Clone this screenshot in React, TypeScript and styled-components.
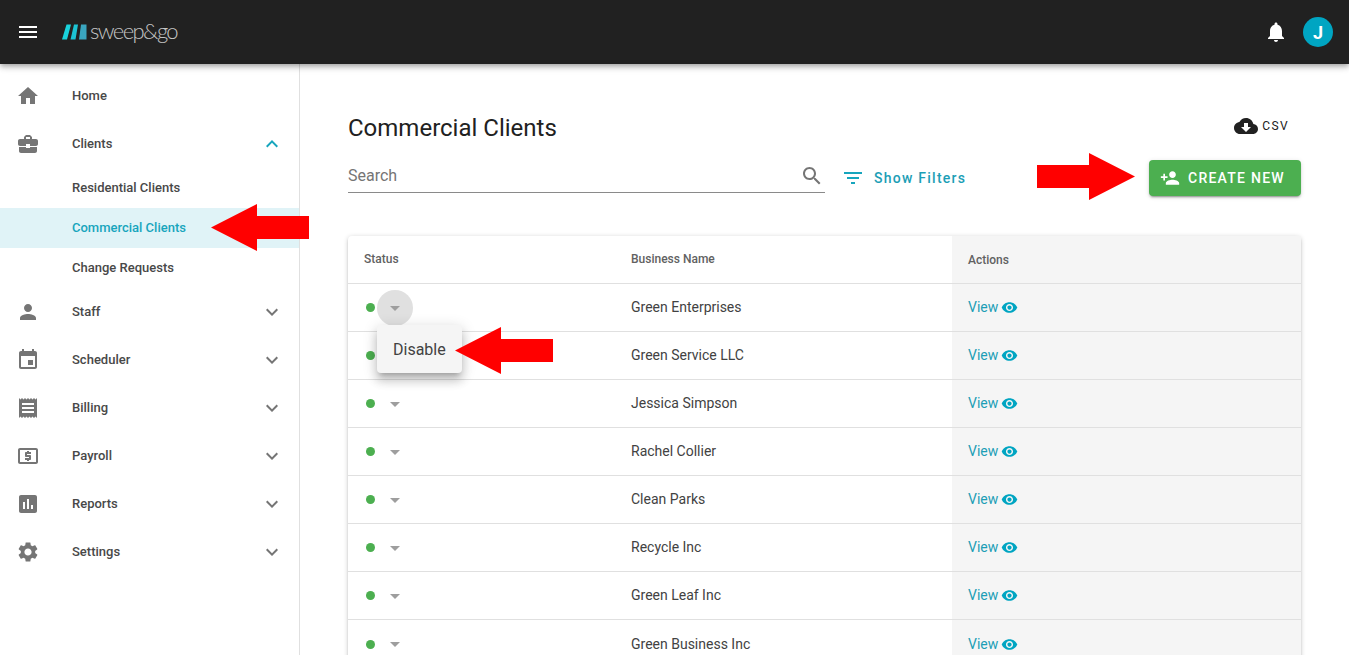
import React from 'react';
import styled, { createGlobalStyle } from 'styled-components';

const ICONS = {
  menu: 'M3 18h18v-2H3v2zm0-5h18v-2H3v2zm0-7v2h18V6H3z',
  home: 'M10 20v-6h4v6h5v-8h3L12 3 2 12h3v8z',
  business:
    'M10 16v-1H3.01L3 19c0 1.11.89 2 2 2h14c1.11 0 2-.89 2-2v-4h-7v1h-4zm10-9h-4.01V5l-2-2h-4l-2 2v2H4c-1.1 0-2 .9-2 2v3c0 1.11.89 2 2 2h6v-2h4v2h6c1.1 0 2-.9 2-2V9c0-1.1-.9-2-2-2zm-6 0h-4V5h4v2z',
  person:
    'M12 12c2.21 0 4-1.79 4-4s-1.79-4-4-4-4 1.79-4 4 1.79 4 4 4zm0 2c-2.67 0-8 1.34-8 4v2h16v-2c0-2.66-5.33-4-8-4z',
  event:
    'M17 12h-5v5h5v-5zM16 1v2H8V1H6v2H5c-1.11 0-1.99.9-1.99 2L3 19c0 1.1.89 2 2 2h14c1.1 0 2-.9 2-2V5c0-1.1-.9-2-2-2h-1V1h-2zm3 18H5V8h14v11z',
  receipt:
    'M18 17H6v-2h12v2zm0-4H6v-2h12v2zm0-4H6V7h12v2zM3 22l1.5-1.5L6 22l1.5-1.5L9 22l1.5-1.5L12 22l1.5-1.5L15 22l1.5-1.5L18 22l1.5-1.5L21 22V2l-1.5 1.5L18 2l-1.5 1.5L15 2l-1.5 1.5L12 2l-1.5 1.5L9 2 7.5 3.5 6 2 4.5 3.5 3 2v20z',
  atm: 'M11 17h2v-1h1c.55 0 1-.45 1-1v-3c0-.55-.45-1-1-1h-3v-1h4V8h-2V7h-2v1h-1c-.55 0-1 .45-1 1v3c0 .55.45 1 1 1h3v1H9v2h2v1zm9-13H4c-1.11 0-1.99.89-1.99 2L2 18c0 1.11.89 2 2 2h16c1.11 0 2-.89 2-2V6c0-1.11-.89-2-2-2zm0 14H4V6h16v12z',
  assessment:
    'M19 3H5c-1.1 0-2 .9-2 2v14c0 1.1.9 2 2 2h14c1.1 0 2-.9 2-2V5c0-1.1-.9-2-2-2zM9 17H7v-7h2v7zm4 0h-2V7h2v10zm4 0h-2v-4h2v4z',
  settings:
    'M19.14 12.94c.04-.3.06-.61.06-.94 0-.32-.02-.64-.07-.94l2.03-1.58c.18-.14.23-.41.12-.61l-1.92-3.32c-.12-.22-.37-.29-.59-.22l-2.39.96c-.5-.38-1.03-.7-1.62-.94l-.36-2.54c-.04-.24-.24-.41-.48-.41h-3.84c-.24 0-.43.17-.47.41l-.36 2.54c-.59.24-1.13.57-1.62.94l-2.39-.96c-.22-.08-.47 0-.59.22L2.74 8.87c-.12.21-.08.47.12.61l2.03 1.58c-.05.3-.09.63-.09.94s.02.64.07.94l-2.03 1.58c-.18.14-.23.41-.12.61l1.92 3.32c.12.22.37.29.59.22l2.39-.96c.5.38 1.03.7 1.62.94l.36 2.54c.05.24.24.41.48.41h3.84c.24 0 .44-.17.47-.41l.36-2.54c.59-.24 1.13-.56 1.62-.94l2.39.96c.22.08.47 0 .59-.22l1.92-3.32c.12-.22.07-.47-.12-.61l-2.01-1.58zM12 15.6c-1.98 0-3.6-1.62-3.6-3.6s1.62-3.6 3.6-3.6 3.6 1.62 3.6 3.6-1.62 3.6-3.6 3.6z',
  expandMore: 'M16.59 8.59 12 13.17 7.41 8.59 6 10l6 6 6-6z',
  expandLess: 'M12 8l-6 6 1.41 1.41L12 10.83l4.59 4.58L18 14z',
  search:
    'M15.5 14h-.79l-.28-.27C15.41 12.59 16 11.11 16 9.5 16 5.91 13.09 3 9.5 3S3 5.91 3 9.5 5.91 16 9.5 16c1.61 0 3.09-.59 4.23-1.57l.27.28v.79l5 4.99L20.49 19l-4.99-5zm-6 0C7.01 14 5 11.99 5 9.5S7.01 5 9.5 5 14 7.01 14 9.5 11.99 14 9.5 14z',
  filter: 'M10 18h4v-2h-4v2zM3 6v2h18V6H3zm3 7h12v-2H6v2z',
  cloud:
    'M19.35 10.04C18.67 6.59 15.64 4 12 4 9.11 4 6.6 5.64 5.35 8.04 2.34 8.36 0 10.91 0 14c0 3.31 2.69 6 6 6h13c2.76 0 5-2.24 5-5 0-2.64-2.05-4.78-4.65-4.96zM17 13l-5 5-5-5h3V9h4v4h3z',
  personAdd:
    'M15 12c2.21 0 4-1.79 4-4s-1.79-4-4-4-4 1.79-4 4 1.79 4 4 4zm-9-2V7H4v3H1v2h3v3h2v-3h3v-2H6zm9 4c-2.67 0-8 1.34-8 4v2h16v-2c0-2.66-5.33-4-8-4z',
  bell: 'M12 22c1.1 0 2-.9 2-2h-4c0 1.1.89 2 2 2zm6-6v-5c0-3.07-1.64-5.64-4.5-6.32V4c0-.83-.67-1.5-1.5-1.5s-1.5.67-1.5 1.5v.68C7.63 5.36 6 7.92 6 11v5l-2 2v1h16v-1l-2-2z',
  eye: 'M12 4.5C7 4.5 2.73 7.61 1 12c1.73 4.39 6 7.5 11 7.5s9.27-3.11 11-7.5c-1.73-4.39-6-7.5-11-7.5zM12 17c-2.76 0-5-2.24-5-5s2.24-5 5-5 5 2.24 5 5-2.24 5-5 5zm0-8c-1.66 0-3 1.34-3 3s1.34 3 3 3 3-1.34 3-3-1.34-3-3-3z',
  dropDown: 'M7 10l5 5 5-5z',
};

type IconName = keyof typeof ICONS;

const GlobalStyle = createGlobalStyle`
  html, body {
    margin: 0;
    height: 100%;
    overflow: hidden;
    background: #fff;
    font-family: Roboto, "Liberation Sans", sans-serif;
  }
  * { box-sizing: border-box; }
`;

const StyledIcon = styled.svg<{ $size: number; $color: string }>`
  width: ${({ $size }) => $size}px;
  height: ${({ $size }) => $size}px;
  fill: ${({ $color }) => $color};
  flex-shrink: 0;
  display: block;
`;

const Icon = ({
  name,
  size = 24,
  color = '#757575',
}: {
  name: IconName;
  size?: number;
  color?: string;
}) => (
  <StyledIcon viewBox="0 0 24 24" $size={size} $color={color}>
    <path d={ICONS[name]} />
  </StyledIcon>
);

const Page = styled.div`
  position: relative;
  width: 1349px;
  height: 655px;
  overflow: hidden;
  display: flex;
  flex-direction: column;
`;

const TopBar = styled.header`
  height: 64px;
  flex-shrink: 0;
  background: #212121;
  display: flex;
  align-items: center;
  padding: 0 16px;
  box-shadow: 0 2px 4px -1px rgba(0, 0, 0, 0.2), 0 4px 5px rgba(0, 0, 0, 0.14),
    0 1px 10px rgba(0, 0, 0, 0.12);
  position: relative;
  z-index: 2;
`;

const Logo = styled.div`
  display: flex;
  align-items: center;
  margin-left: 22px;
  gap: 3px;
`;

const LogoText = styled.span`
  font-family: Lato, sans-serif;
  font-weight: 300;
  font-size: 22px;
  letter-spacing: -1.6px;
  line-height: 24px;
  color: #c4c4c4;
  padding-bottom: 2px;
`;

const TopActions = styled.div`
  margin-left: auto;
  display: flex;
  align-items: center;
  gap: 15px;
`;

const Avatar = styled.div`
  width: 30px;
  height: 30px;
  border-radius: 50%;
  background: #00a5c2;
  color: #fff;
  font-size: 18px;
  font-weight: 700;
  display: flex;
  align-items: center;
  justify-content: center;
`;

const Body = styled.div`
  flex: 1;
  display: flex;
  min-height: 0;
`;

const Sidebar = styled.nav`
  width: 300px;
  flex-shrink: 0;
  border-right: 1px solid #e0e0e0;
  padding-top: 8px;
`;

const NavRow = styled.div`
  height: 48px;
  display: flex;
  align-items: center;
  padding: 0 16px;
  font-size: 13px;
  font-weight: 500;
  color: #484848;
`;

const NavLabel = styled.span`
  margin-left: 32px;
  padding-bottom: 2px;
  flex: 1;
`;

const Chevron = styled.span`
  margin-right: -1px;
  margin-left: auto;
`;

const SubRow = styled.div<{ $active?: boolean }>`
  height: 40px;
  display: flex;
  align-items: center;
  padding: 0 0 2px 72px;
  font-size: 13px;
  font-weight: 500;
  color: ${({ $active }) => ($active ? '#17a5bd' : '#484848')};
  background: ${({ $active }) => ($active ? '#e0f3f7' : 'transparent')};
`;

const Main = styled.main`
  flex: 1;
  min-width: 0;
  padding: 0 48px;
`;

const TitleRow = styled.div`
  display: flex;
  justify-content: space-between;
  align-items: flex-start;
  padding-top: 49px;
  height: 96px;
`;

const Title = styled.h1`
  margin: 0;
  font-size: 24px;
  font-weight: 400;
  line-height: 30px;
  color: #212121;
`;

const CsvLink = styled.div`
  display: flex;
  align-items: center;
  gap: 4px;
  font-size: 12px;
  font-weight: 400;
  letter-spacing: 1.4px;
  color: #212121;
  margin-right: 12px;
  margin-top: 1px;
`;

const ToolRow = styled.div`
  display: flex;
  align-items: flex-start;
`;

const SearchField = styled.div`
  width: 477px;
  height: 33px;
  padding-right: 1px;
  border-bottom: 1px solid #8a8a8a;
  display: flex;
  align-items: center;
  justify-content: space-between;
  color: #757575;
  font-size: 16px;
`;

const SearchLabel = styled.span`
  padding-bottom: 2px;
`;

const FilterButton = styled.div`
  display: flex;
  align-items: center;
  gap: 9px;
  margin-left: 16px;
  height: 36px;
  font-size: 14px;
  font-weight: 500;
  letter-spacing: 1.25px;
  color: #1c9eb6;
`;

const CreateButton = styled.div`
  margin-left: auto;
  width: 152px;
  height: 36px;
  padding-left: 11px;
  background: #4caf50;
  border-radius: 4px;
  color: #fff;
  display: flex;
  align-items: center;
  gap: 8px;
  font-size: 14px;
  font-weight: 500;
  letter-spacing: 1.25px;
  box-shadow: 0 3px 1px -2px rgba(0, 0, 0, 0.2), 0 2px 2px rgba(0, 0, 0, 0.14),
    0 1px 5px rgba(0, 0, 0, 0.12);
`;

const TableCard = styled.section`
  margin-top: 40px;
  border-radius: 4px;
  box-shadow: 0 1px 5px rgba(0, 0, 0, 0.2), 0 2px 2px rgba(0, 0, 0, 0.12);
  background: #fff;
`;

const Row = styled.div<{ $head?: boolean }>`
  display: grid;
  grid-template-columns: 283px 321px 1fr;
  height: 48px;
  border-bottom: 1px solid #e0e0e0;
  font-size: ${({ $head }) => ($head ? '12px' : '14px')};
  font-weight: ${({ $head }) => ($head ? 500 : 400)};
  color: ${({ $head }) => ($head ? '#616161' : '#424242')};
  &:last-child {
    border-bottom: none;
  }
`;

const Cell = styled.div`
  display: flex;
  align-items: center;
`;

const TextCell = styled(Cell)`
  padding-bottom: 1px;
`;

const StatusCell = styled(Cell)`
  position: relative;
  padding-left: 18px;
`;

const HeadStatus = styled(TextCell)`
  padding-left: 16px;
`;

const ActionCell = styled(Cell)<{ $head?: boolean }>`
  background: #f5f5f5;
  padding-left: 16px;
  color: ${({ $head }) => ($head ? '#616161' : '#1c9eb6')};
  gap: 3px;
`;

const ViewLabel = styled.span`
  padding-bottom: 1px;
`;

const Dot = styled.span`
  width: 9px;
  height: 9px;
  border-radius: 50%;
  background: #4caf50;
`;

const DropButton = styled.span<{ $open?: boolean }>`
  width: 36px;
  height: 36px;
  margin-left: 2px;
  border-radius: 50%;
  background: ${({ $open }) => ($open ? '#e0e0e0' : 'transparent')};
  display: flex;
  align-items: center;
  justify-content: center;
`;

const Menu = styled.div`
  position: absolute;
  left: 29px;
  top: 41px;
  width: 85px;
  height: 48px;
  background: #f5f5f5;
  border-radius: 4px;
  color: #424242;
  font-size: 16px;
  display: flex;
  align-items: center;
  padding-left: 16px;
  z-index: 1;
  box-shadow: 0 5px 5px -3px rgba(0, 0, 0, 0.2), 0 8px 10px 1px rgba(0, 0, 0, 0.14),
    0 3px 14px 2px rgba(0, 0, 0, 0.12);
`;

const Arrow = styled.svg<{ $x: number; $y: number }>`
  position: absolute;
  left: ${({ $x }) => $x}px;
  top: ${({ $y }) => $y}px;
  width: 98px;
  height: 47px;
  z-index: 3;
  fill: #ff0000;
`;

const NAV_BOTTOM: { icon: IconName; label: string }[] = [
  { icon: 'person', label: 'Staff' },
  { icon: 'event', label: 'Scheduler' },
  { icon: 'receipt', label: 'Billing' },
  { icon: 'atm', label: 'Payroll' },
  { icon: 'assessment', label: 'Reports' },
  { icon: 'settings', label: 'Settings' },
];

const CLIENTS = [
  'Green Enterprises',
  'Green Service LLC',
  'Jessica Simpson',
  'Rachel Collier',
  'Clean Parks',
  'Recycle Inc',
  'Green Leaf Inc',
  'Green Business Inc',
];

const App = () => {
  return (
    <Page>
      <GlobalStyle />
      <TopBar>
        <Icon name="menu" color="#fff" />
        <Logo>
          <svg width="25" height="16" viewBox="0 0 25 16">
            <polygon points="4.5,0.5 9,0.5 5,15.5 0,15.5" fill="#19d3dc" />
            <polygon points="12,0.5 16,0.5 13.5,15.5 8.5,15.5" fill="#1cc4d4" />
            <polygon points="19,0.5 24.5,0.5 24.5,15.5 17,15.5" fill="#3aa6c0" />
          </svg>
          <LogoText>sweep&amp;go</LogoText>
        </Logo>
        <TopActions>
          <Icon name="bell" color="#fff" />
          <Avatar>J</Avatar>
        </TopActions>
      </TopBar>
      <Body>
        <Sidebar>
          <NavRow>
            <Icon name="home" />
            <NavLabel>Home</NavLabel>
          </NavRow>
          <NavRow>
            <Icon name="business" />
            <NavLabel>Clients</NavLabel>
            <Chevron>
              <Icon name="expandLess" color="#17a5bd" />
            </Chevron>
          </NavRow>
          <SubRow>Residential Clients</SubRow>
          <SubRow $active>Commercial Clients</SubRow>
          <SubRow>Change Requests</SubRow>
          {NAV_BOTTOM.map((item) => (
            <NavRow key={item.label}>
              <Icon name={item.icon} />
              <NavLabel>{item.label}</NavLabel>
              <Chevron>
                <Icon name="expandMore" />
              </Chevron>
            </NavRow>
          ))}
        </Sidebar>
        <Main>
          <TitleRow>
            <Title>Commercial Clients</Title>
            <CsvLink>
              <Icon name="cloud" color="#212121" />
              CSV
            </CsvLink>
          </TitleRow>
          <ToolRow>
            <SearchField>
              <SearchLabel>Search</SearchLabel>
              <Icon name="search" />
            </SearchField>
            <FilterButton>
              <Icon name="filter" color="#17a5bd" />
              Show Filters
            </FilterButton>
            <CreateButton>
              <Icon name="personAdd" color="#fff" size={20} />
              CREATE NEW
            </CreateButton>
          </ToolRow>
          <TableCard>
            <Row $head>
              <HeadStatus>Status</HeadStatus>
              <TextCell>Business Name</TextCell>
              <ActionCell $head>Actions</ActionCell>
            </Row>
            {CLIENTS.map((name, i) => (
              <Row key={name}>
                <StatusCell>
                  <Dot />
                  <DropButton $open={i === 0}>
                    <Icon name="dropDown" color="#9e9e9e" />
                  </DropButton>
                  {i === 0 && <Menu>Disable</Menu>}
                </StatusCell>
                <TextCell>{name}</TextCell>
                <ActionCell>
                  <ViewLabel>View</ViewLabel>
                  <Icon name="eye" size={17} color="#00a5c2" />
                </ActionCell>
              </Row>
            ))}
          </TableCard>
        </Main>
      </Body>
      <Arrow $x={211} $y={204} viewBox="0 0 98 47">
        <polygon points="0,23.5 46,0 46,12 98,12 98,35 46,35 46,47" />
      </Arrow>
      <Arrow $x={1037} $y={153} viewBox="0 0 98 47">
        <polygon points="98,23.5 52,0 52,12 0,12 0,35 52,35 52,47" />
      </Arrow>
      <Arrow $x={455} $y={327} viewBox="0 0 98 47">
        <polygon points="0,23.5 46,0 46,12 98,12 98,35 46,35 46,47" />
      </Arrow>
    </Page>
  );
};

export default App;
